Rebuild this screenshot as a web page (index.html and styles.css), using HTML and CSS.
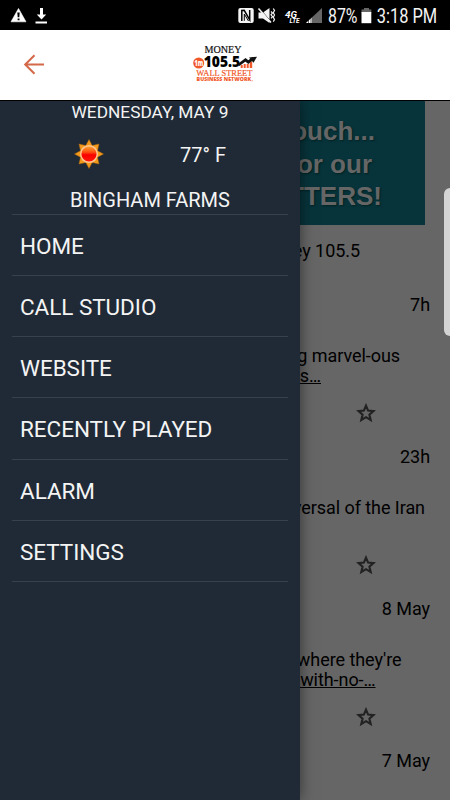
FILE: index.html
```html
<!DOCTYPE html>
<html lang="en">
<head>
	<meta charset="utf-8">
	<title>Money 105.5</title>
	<meta name="viewport" content="width=device-width, initial-scale=1">
	<link rel="stylesheet" href="styles.css">
</head>
<body>
<div class="statusbar">
	<svg class="status-left" width="60" height="30" viewBox="0 0 60 30">
		<path d="M18.500 8.500L26 21.800H11z" fill="#fff" stroke="#fff" stroke-width=".6" stroke-linejoin="round"/>
		<path d="M17.300 12.500h2.400l-.4 4.800h-1.600zM17.600 18.400h1.900v1.900h-1.900z" fill="#000"/>
		<path d="M40 8h3v6.500h3.200L41.500 19.500 36.800 14.500H40zM35.500 21.500h11.500v2H35.500z" fill="#fff"/>
	</svg>
	<svg class="status-right" width="220" height="30" viewBox="230 0 220 30">
		<!-- nfc -->
		<rect x="238.300" y="8" width="15.400" height="15" rx="2" fill="#f4f4f4"/>
		<path d="M241.800 21V10.500l2.400-.2 5.500 9.500V10" fill="none" stroke="#000" stroke-width="1.500"/>
		<path d="M244.300 20.800V14l4.200 7" fill="none" stroke="#000" stroke-width="1"/>
		<!-- sound off -->
		<path d="M258.500 12.500h4.500l6.500-4.500v15l-6.500-4.500h-4.500z" fill="#f4f4f4"/>
		<path d="M259.500 8.500l11 12.500" stroke="#000" stroke-width="1"/>
		<path d="M258.500 8.500l12.500 14" stroke="#f4f4f4" stroke-width="1.500"/>
		<path d="M271 11.500l1.500 1.500-1.500 1.800 1.500 1.800-1.500 1.700M273.300 8.500l1.200 2-1.200 2.200 1.200 2.300-1.200 2.300 1.200 2.300-1.200 2" fill="none" stroke="#f4f4f4" stroke-width="1.200"/>
		<!-- network -->
		<text class="net" x="285" y="17.500" font-size="9" textLength="12" lengthAdjust="spacingAndGlyphs">4G</text>
		<text class="net" x="289.500" y="23" font-size="6.500" textLength="10" lengthAdjust="spacingAndGlyphs">LTE</text>
		<path d="M322 8v15h-16z" fill="#666"/>
		<path d="M306 23l6-5.600V23z" fill="#fff"/>
		<path d="M308.500 18v5M311 17v6" stroke="#000" stroke-width=".6"/>
		<text class="status-text" x="328" y="23" textLength="29.500" lengthAdjust="spacingAndGlyphs">87%</text>
		<path d="M364 8h5v1.500h2.300V13h-9.800V9.500H364z" fill="#666"/>
		<rect x="361.500" y="12" width="9.800" height="11.200" fill="#fff"/>
		<text class="status-text" x="376.700" y="23" textLength="60.500" lengthAdjust="spacingAndGlyphs">3:18 PM</text>
	</svg>
</div>

<div class="header">
	<svg class="back" width="24" height="24" viewBox="0 0 24 24">
		<path d="M22 11.500H3M12.500 2.200L3.200 11.500l9.300 9.200" fill="none" stroke="#d4694a" stroke-width="2"/>
	</svg>
	<svg class="logo" width="90" height="60" viewBox="180 36 90 60">
		<text class="logo-serif" x="204.500" y="54" font-size="9.600" textLength="37" lengthAdjust="spacingAndGlyphs">MONEY</text>
		<circle cx="198.700" cy="64" r="5.500" fill="#f1592a"/>
		<text class="logo-sans" x="194.500" y="67" font-size="8" fill="#fff" textLength="8.500" lengthAdjust="spacingAndGlyphs">1m</text>
		<text class="logo-sans" x="203.700" y="68" font-size="16.500" textLength="36.500" lengthAdjust="spacingAndGlyphs">105.5</text>
		<path d="M240.700 69v-3h2v3zM243.700 69v-4h2v4zM246.700 69v-4h2v4zM249.700 69v-6.500h2.500V69z" fill="#f1592a"/>
		<path d="M238.500 66l7-5.200 2.800 2.300 5-4" fill="none" stroke="#111" stroke-width="2.800"/>
		<path d="M249 58.500l8-.8-3.500 6z" fill="#111"/>
		<text class="logo-serif orange" x="196.300" y="77" font-size="9" textLength="56" lengthAdjust="spacingAndGlyphs">WALL STREET</text>
		<text class="logo-sans orange" x="196.600" y="82.300" font-size="5.600" textLength="54.500" lengthAdjust="spacingAndGlyphs">BUSINESS NETWORK</text>
		<path d="M251.500 81.800h1.300" stroke="#f1592a" stroke-width=".7"/>
	</svg>
</div>

<div class="content">
	<div class="feed">
		<div class="banner">
			<div class="banner-line first">ouch...</div>
			<div class="banner-line second">or our</div>
			<div class="banner-line third">TTERS!</div>
		</div>
		<div class="station">ey 105.5</div>
		<div class="post">
			<div class="age">7h</div>
			<div class="text one"><p>g marvel-ous</p><p class="link">s…</p></div>
			<svg class="star" width="20" height="20" viewBox="0 0 20 20"><path d="M10 2.600l2.100 5 5.400.5-4.100 3.500 1.300 5.400L10 14.200 5.300 17l1.300-5.400-4.100-3.500 5.400-.5z"/></svg>
		</div>
		<div class="post">
			<div class="age">23h</div>
			<div class="text two"><p>versal of the Iran</p></div>
			<svg class="star" width="20" height="20" viewBox="0 0 20 20"><path d="M10 2.600l2.100 5 5.400.5-4.100 3.500 1.300 5.400L10 14.200 5.300 17l1.300-5.400-4.100-3.500 5.400-.5z"/></svg>
		</div>
		<div class="post">
			<div class="age">8 May</div>
			<div class="text three"><p>where they're</p><p class="link">/with-no-…</p></div>
			<svg class="star" width="20" height="20" viewBox="0 0 20 20"><path d="M10 2.600l2.100 5 5.400.5-4.100 3.500 1.300 5.400L10 14.200 5.300 17l1.300-5.400-4.100-3.500 5.400-.5z"/></svg>
		</div>
		<div class="post">
			<div class="age">7 May</div>
		</div>
	</div>

	<div class="drawer">
		<div class="date">WEDNESDAY, MAY 9</div>
		<div class="weather">
			<svg class="sun" width="30" height="30" viewBox="-15 -15 30 30">
				<defs>
					<linearGradient id="disc" x1="0" y1="0" x2="0" y2="1">
						<stop offset="0" stop-color="#ffb030"/>
						<stop offset=".4" stop-color="#ff4a10"/>
						<stop offset=".55" stop-color="#fa0000"/>
						<stop offset="1" stop-color="#ff1a08"/>
					</linearGradient>
				</defs>
				<path d="M0-14.500L3.200-8.500 10-10 8.500-3.200 14.500 0 8.500 3.200 10 10 3.200 8.500 0 14.500-3.200 8.500-10 10-8.500 3.200-14.500 0-8.500-3.200-10-10-3.200-8.500z" fill="#f39a1c" stroke="#a8640c" stroke-width=".5"/>
				<circle r="8.300" fill="url(#disc)" stroke="#ffc590" stroke-width="1.500"/>
			</svg>
			<div class="temp">77° F</div>
		</div>
		<div class="place">BINGHAM FARMS</div>
		<ul class="menu">
			<li>HOME</li>
			<li>CALL STUDIO</li>
			<li>WEBSITE</li>
			<li>RECENTLY PLAYED</li>
			<li>ALARM</li>
			<li>SETTINGS</li>
		</ul>
	</div>
	<div class="edge-handle"></div>
</div>
</body>
</html>
```

FILE: styles.css
```css
* {
	box-sizing: border-box;
}

body {
	margin: 0;
	width: 450px;
	height: 800px;
	overflow: hidden;
	background: #666;
	font-family: Roboto, "Liberation Sans", sans-serif;
}

p {
	margin: 0;
}

.statusbar {
	display: flex;
	justify-content: space-between;
	height: 30px;
	background: #000;
}

.status-text {
	font-size: 20px;
	fill: #f4f4f4;
}

.net {
	font-weight: bold;
	font-style: italic;
	fill: #fff;
}

.header {
	display: flex;
	align-items: center;
	height: 70px;
	padding-left: 22px;
	background: #fff;
}

.back {
	margin-right: 134px;
}

.logo-serif {
	font-family: "Liberation Serif", serif;
	fill: #111;
	stroke: #111;
	stroke-width: .2px;
}

.logo-sans {
	font-family: "Open Sans", sans-serif;
	font-weight: 800;
}

.orange {
	fill: #f1592a;
	stroke: #f1592a;
}

.logo-sans.orange {
	stroke: none;
}

.content {
	position: relative;
	height: 700px;
	overflow: hidden;
	border-top: 1px solid #000;
}

/* feed, dimmed while the drawer is open */
.feed {
	background: #666;
	height: 100%;
	font-size: 18px;
	letter-spacing: -.06px;
	line-height: 20px;
	color: #000;
	text-align: right;
}

.banner {
	height: 124px;
	margin: 0 25px;
	padding-top: 14px;
	background: #07343b;
	font: bold 26px/32.5px "Liberation Sans", sans-serif;
	letter-spacing: 0;
	color: #666;
	text-shadow: 1px 1px 2px #022;
}

.first {
	padding-right: 50px;
}

.second {
	padding-right: 53px;
}

.third {
	padding-right: 43px;
}

.station {
	padding: 16px 90px 0 0;
	height: 69.500px;
}

.post {
	display: grid;
	grid-template-rows: 51px 57.250px 44px;
}

.age {
	padding-right: 20px;
}

.one {
	padding-right: 50px;
}

.two {
	padding-right: 25px;
}

.three {
	padding-right: 48.500px;
}

.link {
	text-decoration: underline;
}

.one .link {
	padding-right: 79px;
}

.three .link {
	padding-right: 26px;
}

.star {
	justify-self: end;
	margin-right: 74.300px;
}

.star path {
	fill: none;
	stroke: #222;
	stroke-width: 2.100px;
}

.drawer {
	position: absolute;
	top: 0;
	left: 0;
	width: 300px;
	height: 100%;
	padding: 0 12px;
	background: #202a36;
	box-shadow: 0 0 14px rgba(0, 0, 0, .5);
	color: #f4f4f4;
	text-align: center;
}

.date {
	font-size: 17.300px;
	line-height: 23px;
}

.weather {
	display: flex;
	align-items: center;
	height: 61px;
	padding-left: 61.500px;
}

.sun {
	margin-bottom: 2px;
}

.temp {
	margin-left: 76.500px;
	font-size: 20px;
}

.place {
	height: 28.500px;
	font-size: 20px;
	line-height: 31px;
}

.menu {
	margin: 0;
	padding: 0;
	list-style: none;
	border-top: 1px solid #36414b;
	text-align: left;
}

.menu li {
	height: 61.250px;
	padding-left: 8px;
	border-bottom: 1px solid #36414b;
	font-size: 22.500px;
	letter-spacing: -.05px;
	line-height: 62.500px;
}

.edge-handle {
	position: absolute;
	top: 87px;
	right: 0;
	width: 6px;
	height: 148px;
	border-radius: 6px 0 0 6px;
	background: #d4d4d4;
}
```
